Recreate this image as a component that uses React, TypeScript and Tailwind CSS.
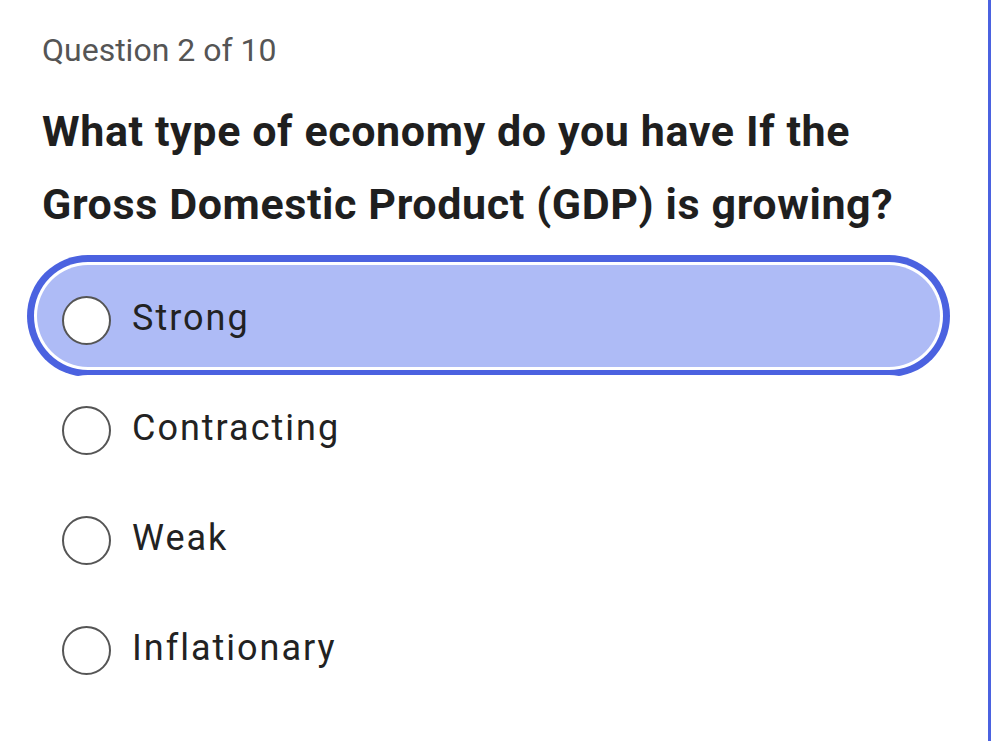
import { useState } from 'react';

const OPTIONS = ['Strong', 'Contracting', 'Weak', 'Inflationary'];

export default function App() {
  const [selected, setSelected] = useState(0);

  return (
    <div
      className="w-[991px] h-[741px] bg-white border-r-[3px] border-[#4b62e0] overflow-hidden"
      style={{ fontFamily: 'Roboto, "Noto Sans", sans-serif' }}
    >
      <div className="pt-[30px] px-[37px]">
        <div className="ml-[5px] text-[32px] leading-[40px] text-[#555555]">Question 2 of 10</div>

        <h1 className="ml-[5px] mt-[25px] text-[43px] leading-[73px] font-bold text-[#1f1f1f] tracking-[0.6px]">
          What type of economy do you have If the
          <br />
          Gross Domestic Product (GDP) is growing?
        </h1>

        <div className="mt-[24px] flex flex-col gap-[8px] w-[903px]">
          {OPTIONS.map((opt, i) => {
            const isActive = selected === i;
            return (
              <button
                key={opt}
                onClick={() => setSelected(i)}
                className={`flex items-center h-[102px] pl-[25px] rounded-full text-left ${
                  isActive
                    ? 'bg-[#aebbf6] ring-[7px] ring-[#4b62e0] ring-offset-[3px] ring-offset-white'
                    : 'bg-white'
                }`}
              >
                {/* Radio circle */}
                <span className="w-[49px] h-[49px] rounded-full border-2 border-[#555555] bg-white flex-shrink-0 mt-[8px]" />
                <span className="ml-[21px] mt-[4px] text-[36px] text-[#222222] tracking-[2px]">{opt}</span>
              </button>
            );
          })}
        </div>
      </div>
    </div>
  );
}
